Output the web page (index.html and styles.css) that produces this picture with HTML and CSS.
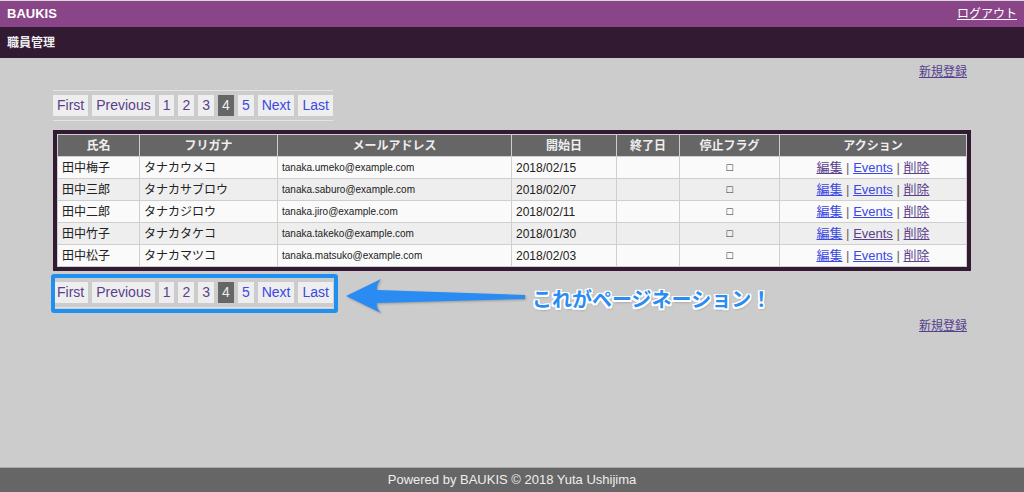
FILE: index.html
```html
<!DOCTYPE html>
<html lang="ja">
<head>
<meta charset="utf-8">
<title>職員管理 - BAUKIS</title>
<link rel="stylesheet" href="styles.css">
</head>
<body>
<header class="site-header">
  <span class="logo">BAUKIS</span>
  <a class="logout" href="#">ログアウト</a>
</header>
<div class="subheader">職員管理</div>
<main class="content">
  <div class="links"><a href="#">新規登録</a></div>
  <nav class="pagination pagination-top">
    <a class="page visited" href="#">First</a>
    <a class="page visited" href="#">Previous</a>
    <a class="page visited" href="#">1</a>
    <a class="page visited" href="#">2</a>
    <a class="page visited" href="#">3</a>
    <span class="page current">4</span>
    <a class="page" href="#">5</a>
    <a class="page" href="#">Next</a>
    <a class="page" href="#">Last</a>
  </nav>
  <div class="table-wrapper">
    <table class="listing">
      <thead>
        <tr>
          <th class="c-name">氏名</th>
          <th class="c-kana">フリガナ</th>
          <th class="c-mail">メールアドレス</th>
          <th class="c-start">開始日</th>
          <th class="c-end">終了日</th>
          <th class="c-flag">停止フラグ</th>
          <th class="c-act">アクション</th>
        </tr>
      </thead>
      <tbody>
        <tr>
          <td>田中梅子</td><td>タナカウメコ</td><td class="mail">tanaka.umeko@example.com</td><td class="date">2018/02/15</td><td></td><td class="flag">☐</td>
          <td class="actions"><a class="v" href="#">編集</a> <span class="sep">|</span> <a href="#">Events</a> <span class="sep">|</span> <a class="v" href="#">削除</a></td>
        </tr>
        <tr class="stripe">
          <td>田中三郎</td><td>タナカサブロウ</td><td class="mail">tanaka.saburo@example.com</td><td class="date">2018/02/07</td><td></td><td class="flag">☐</td>
          <td class="actions"><a href="#">編集</a> <span class="sep">|</span> <a href="#">Events</a> <span class="sep">|</span> <a class="v" href="#">削除</a></td>
        </tr>
        <tr>
          <td>田中二郎</td><td>タナカジロウ</td><td class="mail">tanaka.jiro@example.com</td><td class="date">2018/02/11</td><td></td><td class="flag">☐</td>
          <td class="actions"><a href="#">編集</a> <span class="sep">|</span> <a href="#">Events</a> <span class="sep">|</span> <a class="v" href="#">削除</a></td>
        </tr>
        <tr class="stripe">
          <td>田中竹子</td><td>タナカタケコ</td><td class="mail">tanaka.takeko@example.com</td><td class="date">2018/01/30</td><td></td><td class="flag">☐</td>
          <td class="actions"><a href="#">編集</a> <span class="sep">|</span> <a class="v" href="#">Events</a> <span class="sep">|</span> <a class="v" href="#">削除</a></td>
        </tr>
        <tr>
          <td>田中松子</td><td>タナカマツコ</td><td class="mail">tanaka.matsuko@example.com</td><td class="date">2018/02/03</td><td></td><td class="flag">☐</td>
          <td class="actions"><a href="#">編集</a> <span class="sep">|</span> <a href="#">Events</a> <span class="sep">|</span> <a class="v" href="#">削除</a></td>
        </tr>
      </tbody>
    </table>
  </div>
  <div class="annotated">
    <nav class="pagination pagination-bottom">
      <a class="page visited" href="#">First</a>
      <a class="page visited" href="#">Previous</a>
      <a class="page visited" href="#">1</a>
      <a class="page visited" href="#">2</a>
      <a class="page visited" href="#">3</a>
      <span class="page current">4</span>
      <a class="page" href="#">5</a>
      <a class="page" href="#">Next</a>
      <a class="page" href="#">Last</a>
    </nav>
    <div class="highlight"></div>
    <svg class="arrow" width="190" height="40" viewBox="0 0 190 40">
      <path d="M3 19 L38 2 Q33 8 34 13 L182 18 L182 22 L34 26 Q33 31 38 36 Z" fill="#2a8cf2"/>
    </svg>
    <div class="label">これがページネーション！</div>
  </div>
  <div class="links links-bottom"><a href="#">新規登録</a></div>
</main>
<footer class="site-footer">Powered by BAUKIS © 2018 Yuta Ushijima</footer>
</body>
</html>
```

FILE: styles.css
```css
* { box-sizing: border-box; }

html, body {
  margin: 0;
  padding: 0;
}

body {
  font-family: "Liberation Sans", "Noto Sans CJK JP", sans-serif;
  background: #cccccc;
  color: #222;
  height: 492px;
  display: flex;
  flex-direction: column;
  overflow: hidden;
  border-top: 1px solid #d8d8d8;
}

.site-header {
  height: 26px;
  background: #8a4589;
  display: flex;
  justify-content: space-between;
  align-items: center;
  padding: 0 7px;
  color: #fff;
}

.logo {
  font-weight: bold;
  font-size: 13px;
  line-height: 16px;
}

.logout {
  color: #fff;
  font-size: 12px;
  line-height: 16px;
}

.subheader {
  height: 31px;
  background: #321a32;
  color: #eee;
  font-size: 12px;
  font-weight: bold;
  line-height: 31px;
  padding: 1px 7px 0;
}

.content {
  flex: 1;
  padding: 5px 53px 0;
}

.links {
  text-align: right;
  padding-right: 4px;
  font-size: 12px;
  line-height: 18px;
}

.links a { color: #55408c; }

.links-bottom { margin-top: 9px; }

.pagination {
  display: flex;
  gap: 4px;
  width: fit-content;
  border-top: 1px solid #e4e4e4;
  border-bottom: 1px solid #e4e4e4;
  padding: 4px 0;
}

.pagination-top { margin-top: 9px; }

.page {
  display: block;
  background: #eeeeee;
  font-size: 14px;
  line-height: 21px;
  height: 21px;
  padding: 0 4px;
  text-decoration: none;
  color: #3b48e4;
}

.page.visited { color: #5a3f8c; }

.page.current {
  background: #666;
  color: #eee;
}

.table-wrapper {
  background: #321a32;
  padding: 4px;
  margin-top: 9px;
}

.listing {
  width: 100%;
  table-layout: fixed;
  border-collapse: separate;
  border-spacing: 1px;
  background: #cfcfcf;
}

.listing th {
  background: #666;
  color: #eee;
  font-size: 12px;
  font-weight: bold;
  height: 21px;
  padding: 0 4px;
  line-height: 20px;
  text-align: center;
}

.listing td {
  height: 21px;
  padding: 0 4px;
  font-size: 12px;
  line-height: 20px;
  background: #fafafa;
  white-space: nowrap;
  overflow: hidden;
}

.listing tr.stripe td { background: #eeeeee; }

.c-name { width: 81px; }
.c-kana { width: 137px; }
.c-mail { width: 233px; }
.c-start { width: 104px; }
.c-end { width: 62px; }
.c-flag { width: 99px; }
.c-act { width: 186px; }

.listing td.mail { font-size: 10px; }
.listing td.date { font-size: 12px; }

.listing td.flag {
  text-align: center;
  font-family: "DejaVu Sans", sans-serif;
  font-size: 9px;
  color: #333;
}

.listing td.actions {
  text-align: center;
  font-size: 13px;
}

.actions a { color: #3b48e4; }
.actions a.v { color: #5a3f8c; }
.actions .sep { color: #666; }

.annotated {
  position: relative;
  margin-top: 6px;
}

.highlight {
  position: absolute;
  left: -2px;
  top: -3px;
  width: 287px;
  height: 39px;
  border: 4px solid #1f8ff0;
  border-radius: 3px;
}

.arrow {
  position: absolute;
  left: 290px;
  top: 0;
  filter: drop-shadow(1px 1px 1px rgba(0,0,0,0.25));
}

.label {
  position: absolute;
  left: 479px;
  top: 10px;
  font-family: "Noto Sans CJK JP", sans-serif;
  font-size: 20px;
  font-weight: bold;
  line-height: 24px;
  color: #2a8cf2;
  white-space: nowrap;
  text-shadow:
    -1.5px -1.5px 0 #fff, 1.5px -1.5px 0 #fff, -1.5px 1.5px 0 #fff, 1.5px 1.5px 0 #fff,
    0 -1.5px 0 #fff, 0 1.5px 0 #fff, -1.5px 0 0 #fff, 1.5px 0 0 #fff,
    1px 2px 3px rgba(0,0,0,0.35);
}

.site-footer {
  height: 25px;
  background: #666;
  border-top: 1px solid #a8a8a8;
  color: #eee;
  font-size: 13px;
  line-height: 24px;
  text-align: center;
}
```
